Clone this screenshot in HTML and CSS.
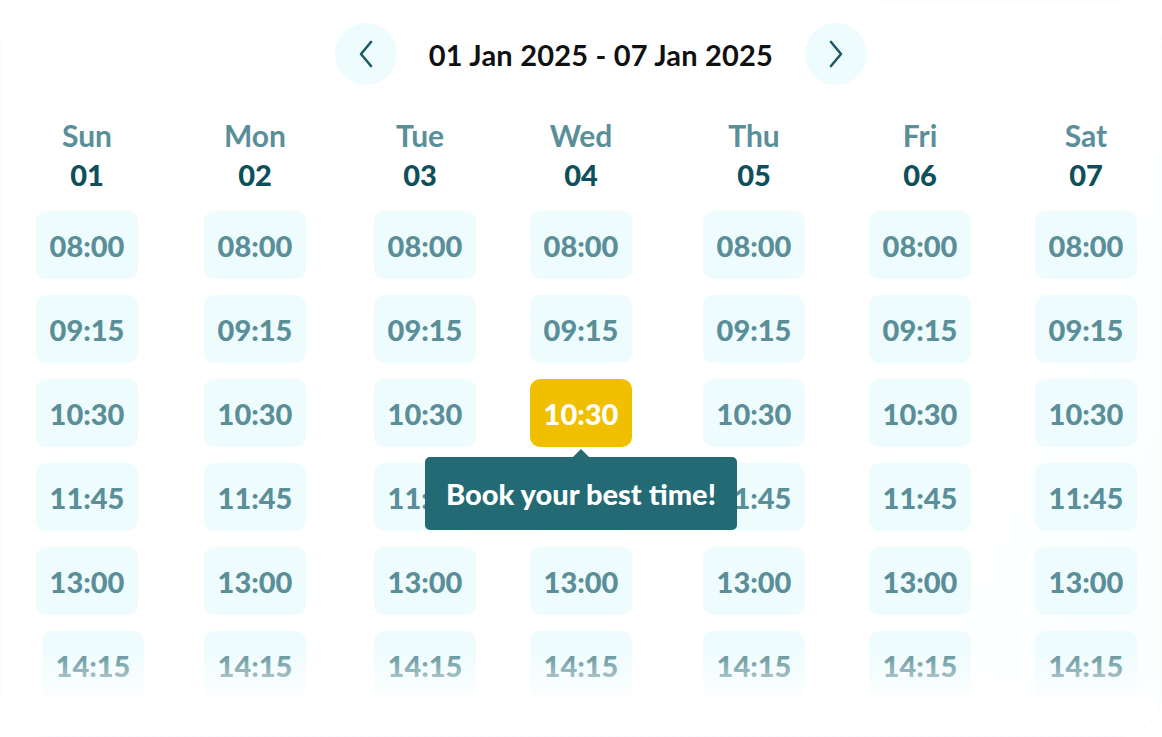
FILE: index.html
```html
<!DOCTYPE html>
<html lang="en">
<head>
<meta charset="utf-8">
<title>Booking week</title>
<link rel="stylesheet" href="styles.css">
</head>
<body>
<div class="page">
  <div class="card">
    <header class="nav">
      <button class="nav-btn" aria-label="Previous week">
        <svg width="16" height="28" viewBox="0 0 16 28"><path d="M13 2 L3 14 L13 26" fill="none" stroke="#1d5b68" stroke-width="2.6" stroke-linecap="round" stroke-linejoin="round"/></svg>
      </button>
      <h1 class="range">01 Jan 2025 - 07 Jan 2025</h1>
      <button class="nav-btn" aria-label="Next week">
        <svg width="16" height="28" viewBox="0 0 16 28"><path d="M3 2 L13 14 L3 26" fill="none" stroke="#1d5b68" stroke-width="2.6" stroke-linecap="round" stroke-linejoin="round"/></svg>
      </button>
    </header>

    <div class="week">
      <div class="day d1">
        <div class="dname">Sun</div><div class="dnum">01</div>
        <div class="slot">08:00</div><div class="slot">09:15</div><div class="slot">10:30</div><div class="slot">11:45</div><div class="slot">13:00</div><div class="slot shift">14:15</div>
      </div>
      <div class="day d2">
        <div class="dname">Mon</div><div class="dnum">02</div>
        <div class="slot">08:00</div><div class="slot">09:15</div><div class="slot">10:30</div><div class="slot">11:45</div><div class="slot">13:00</div><div class="slot">14:15</div>
      </div>
      <div class="day d3">
        <div class="dname">Tue</div><div class="dnum">03</div>
        <div class="slot">08:00</div><div class="slot">09:15</div><div class="slot">10:30</div><div class="slot">11:45</div><div class="slot">13:00</div><div class="slot">14:15</div>
      </div>
      <div class="day d4">
        <div class="dname">Wed</div><div class="dnum">04</div>
        <div class="slot">08:00</div><div class="slot">09:15</div>
        <div class="slot selected">10:30
          <div class="tooltip">Book your best time!</div>
        </div>
        <div class="slot">11:45</div><div class="slot">13:00</div><div class="slot">14:15</div>
      </div>
      <div class="day d5">
        <div class="dname">Thu</div><div class="dnum">05</div>
        <div class="slot">08:00</div><div class="slot">09:15</div><div class="slot">10:30</div><div class="slot">11:45</div><div class="slot">13:00</div><div class="slot">14:15</div>
      </div>
      <div class="day d6">
        <div class="dname">Fri</div><div class="dnum">06</div>
        <div class="slot">08:00</div><div class="slot">09:15</div><div class="slot">10:30</div><div class="slot">11:45</div><div class="slot">13:00</div><div class="slot">14:15</div>
      </div>
      <div class="day d7">
        <div class="dname">Sat</div><div class="dnum">07</div>
        <div class="slot">08:00</div><div class="slot">09:15</div><div class="slot">10:30</div><div class="slot">11:45</div><div class="slot">13:00</div><div class="slot">14:15</div>
      </div>
    </div>
    <div class="fade"></div>
  </div>
</div>
</body>
</html>
```

FILE: styles.css
```css
* { box-sizing: border-box; }
html, body { margin: 0; padding: 0; }
body {
  width: 1162px;
  height: 737px;
  overflow: hidden;
  background: #ffffff;
  font-family: "Lato", "Open Sans", sans-serif;
}
.page {
  width: 1162px;
  height: 737px;
  background: #ffffff;
}
.card {
  position: relative;
  width: 1162px;
  height: 737px;
  border-radius: 44px;
  border: 1px dotted #f2fafb;
  background: linear-gradient(115deg, #ffffff 0%, #ffffff 80%, #f9feff 100%);
  overflow: hidden;
}
.nav {
  display: flex;
  align-items: center;
  justify-content: center;
  gap: 32px;
  padding: 22px 0 0 40px;
}
.nav-btn {
  width: 62px;
  height: 62px;
  border-radius: 50%;
  border: none;
  background: #effcfd;
  display: flex;
  align-items: center;
  justify-content: center;
  padding: 0;
}
.range {
  margin: 0;
  font-size: 29px;
  font-weight: 700;
  color: #111111;
  letter-spacing: 0.2px;
}
.week {
  display: flex;
  padding: 32px 0 0 35px;
}
.day {
  width: 102px;
  display: flex;
  flex-direction: column;
  align-items: center;
}
.d2 { margin-left: 66px; }
.d3 { margin-left: 68px; }
.d4 { margin-left: 54px; }
.d5 { margin-left: 71px; }
.d6 { margin-left: 64px; }
.d7 { margin-left: 64px; }
.d3 .dname, .d3 .dnum { transform: translateX(-5px); }
.dname {
  font-size: 30px;
  font-weight: 700;
  color: #5a8f9a;
  line-height: 36px;
}
.dnum {
  font-size: 29px;
  font-weight: 900;
  color: #0e4f5c;
  line-height: 36px;
  margin-top: 4px;
  margin-bottom: 18px;
}
.slot {
  position: relative;
  width: 102px;
  height: 68px;
  border-radius: 10px;
  background: #effcfd;
  color: #5a8e98;
  font-size: 29px;
  font-weight: 900;
  display: flex;
  align-items: center;
  justify-content: center;
  margin-bottom: 16px;
}
.slot.shift { transform: translateX(6px); }
.slot.selected {
  background: #f0c000;
  color: #ffffff;
  z-index: 2;
}
.tooltip {
  position: absolute;
  top: 78px;
  left: 50%;
  transform: translateX(-50%);
  width: 312px;
  height: 73px;
  border-radius: 5px;
  background: #236a75;
  color: #ffffff;
  font-size: 29px;
  font-weight: 900;
  display: flex;
  align-items: center;
  justify-content: center;
  white-space: nowrap;
}
.tooltip::before {
  content: "";
  position: absolute;
  top: -8px;
  left: 50%;
  margin-left: -8px;
  border-left: 8px solid transparent;
  border-right: 8px solid transparent;
  border-bottom: 8px solid #236a75;
}
.fade {
  position: absolute;
  left: 0;
  right: 0;
  top: 648px;
  height: 89px;
  background: linear-gradient(180deg, rgba(255,255,255,0) 0%, rgba(255,255,255,0.5) 35%, rgba(255,255,255,1) 62%, #ffffff 100%);
  pointer-events: none;
}
```
